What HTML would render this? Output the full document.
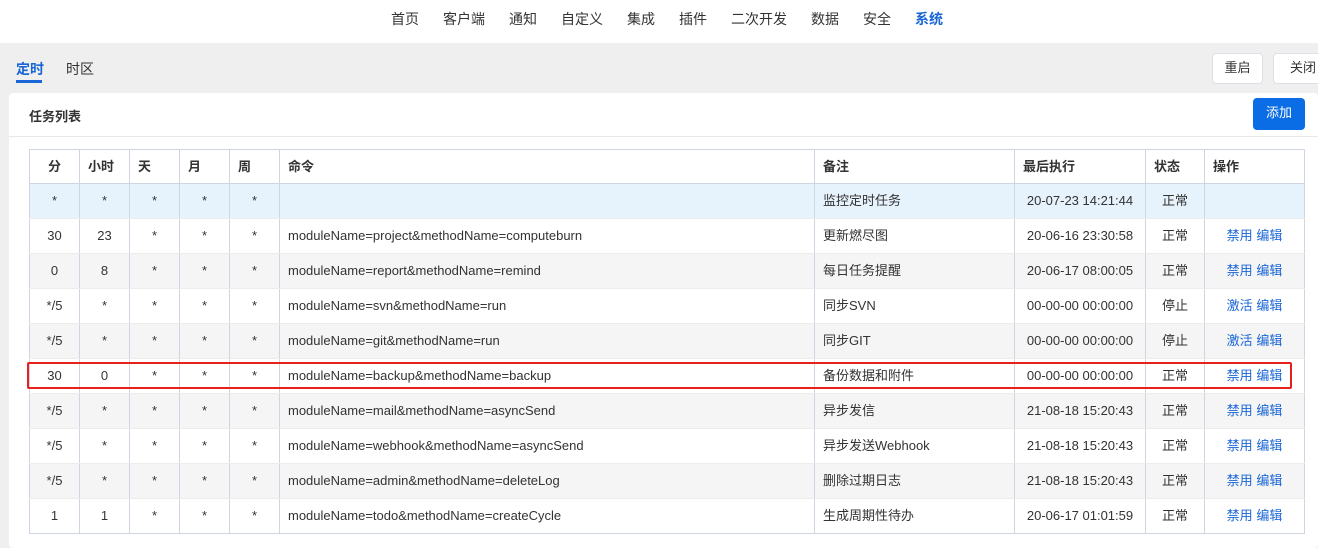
<!DOCTYPE html>
<html><head><meta charset="utf-8"><style>
*{margin:0;padding:0;box-sizing:border-box}
body{width:1318px;height:548px;overflow:hidden;background:#efefef;font-family:"Liberation Sans","Noto Sans CJK SC",sans-serif;font-size:13px;color:#333;position:relative}
.top{position:absolute;left:0;top:0;width:1318px;height:43px;background:#fff}
.nav{position:absolute;top:9px;font-size:14px;color:#333}
.tab{position:absolute;top:59px;font-size:14px}
.btn{position:absolute;top:53px;height:31px;background:#fff;border:1px solid #dcdfe6;border-radius:4px;font-size:13px;text-align:center;line-height:28px}
.card{position:absolute;left:9px;top:93px;width:1309px;height:455px;background:#fff;border-radius:4px}
.hd{position:absolute;left:0;top:0;width:100%;height:44px;border-bottom:1px solid #e8e8e8}
table{position:absolute;left:20px;top:56px;border-collapse:collapse;table-layout:fixed;width:1275px}
td,th{height:35px;border-left:1px solid #cfd5e2;border-right:1px solid #cfd5e2;border-bottom:1px solid #ececec;font-weight:normal;white-space:nowrap;overflow:hidden;vertical-align:middle;padding-bottom:2px}
th{font-weight:bold;text-align:left;padding-left:8px;padding-bottom:3px;border-top:1px solid #cfd5e2;border-bottom:1px solid #cfd5e2;height:34px}
td.c{text-align:center}
td.l{padding-left:8px}
td.z{padding-bottom:3px}
tr.b td{background:#e6f2fc}
tr.g td{background:#f5f5f5}
tr:last-child td{border-bottom:1px solid #cfd5e2}
a{color:#1a66d6;text-decoration:none}
.red{position:absolute;left:27px;top:362px;width:1265px;height:27px;border:2px solid #e8201b;border-radius:2px}
</style></head><body>
<div class="top">
<span class="nav" style="left:391px">首页</span>
<span class="nav" style="left:443px">客户端</span>
<span class="nav" style="left:509px">通知</span>
<span class="nav" style="left:561px">自定义</span>
<span class="nav" style="left:627px">集成</span>
<span class="nav" style="left:679px">插件</span>
<span class="nav" style="left:731px">二次开发</span>
<span class="nav" style="left:811px">数据</span>
<span class="nav" style="left:863px">安全</span>
<span class="nav" style="left:915px;color:#1a66d6;font-weight:bold">系统</span>
</div>
<span class="tab" style="left:16px;color:#1a66d6;font-weight:bold">定时</span>
<div style="position:absolute;left:16px;top:80px;width:26px;height:3px;background:#1a66d6"></div>
<span class="tab" style="left:66px">时区</span>
<div class="btn" style="left:1212px;width:51px">重启</div>
<div class="btn" style="left:1273px;width:60px">关闭</div>
<div class="card">
<div class="hd"><span style="position:absolute;left:20px;top:13px;font-weight:bold;font-size:13px">任务列表</span>
<div style="position:absolute;left:1244px;top:5px;width:52px;height:32px;background:#0b6de6;border-radius:4px;color:#fff;text-align:center;line-height:30px">添加</div></div>
<table>
<colgroup><col style="width:50px"><col style="width:50px"><col style="width:50px"><col style="width:50px"><col style="width:50px"><col style="width:535px"><col style="width:200px"><col style="width:131px"><col style="width:59px"><col style="width:100px"></colgroup>
<tr><th style="text-align:center;padding-left:0">分</th><th>小时</th><th>天</th><th>月</th><th>周</th><th>命令</th><th>备注</th><th>最后执行</th><th>状态</th><th>操作</th></tr>
<tr class="b"><td class="c">*</td><td class="c">*</td><td class="c">*</td><td class="c">*</td><td class="c">*</td><td class="l"></td><td class="l z">监控定时任务</td><td class="c">20-07-23 14:21:44</td><td class="c z">正常</td><td class="c"></td></tr>
<tr><td class="c">30</td><td class="c">23</td><td class="c">*</td><td class="c">*</td><td class="c">*</td><td class="l">moduleName=project&amp;methodName=computeburn</td><td class="l z">更新燃尽图</td><td class="c">20-06-16 23:30:58</td><td class="c z">正常</td><td class="c z"><a>禁用</a> <a>编辑</a></td></tr>
<tr class="g"><td class="c">0</td><td class="c">8</td><td class="c">*</td><td class="c">*</td><td class="c">*</td><td class="l">moduleName=report&amp;methodName=remind</td><td class="l z">每日任务提醒</td><td class="c">20-06-17 08:00:05</td><td class="c z">正常</td><td class="c z"><a>禁用</a> <a>编辑</a></td></tr>
<tr><td class="c">*/5</td><td class="c">*</td><td class="c">*</td><td class="c">*</td><td class="c">*</td><td class="l">moduleName=svn&amp;methodName=run</td><td class="l z">同步SVN</td><td class="c">00-00-00 00:00:00</td><td class="c z">停止</td><td class="c z"><a>激活</a> <a>编辑</a></td></tr>
<tr class="g"><td class="c">*/5</td><td class="c">*</td><td class="c">*</td><td class="c">*</td><td class="c">*</td><td class="l">moduleName=git&amp;methodName=run</td><td class="l z">同步GIT</td><td class="c">00-00-00 00:00:00</td><td class="c z">停止</td><td class="c z"><a>激活</a> <a>编辑</a></td></tr>
<tr><td class="c">30</td><td class="c">0</td><td class="c">*</td><td class="c">*</td><td class="c">*</td><td class="l">moduleName=backup&amp;methodName=backup</td><td class="l z">备份数据和附件</td><td class="c">00-00-00 00:00:00</td><td class="c z">正常</td><td class="c z"><a>禁用</a> <a>编辑</a></td></tr>
<tr class="g"><td class="c">*/5</td><td class="c">*</td><td class="c">*</td><td class="c">*</td><td class="c">*</td><td class="l">moduleName=mail&amp;methodName=asyncSend</td><td class="l z">异步发信</td><td class="c">21-08-18 15:20:43</td><td class="c z">正常</td><td class="c z"><a>禁用</a> <a>编辑</a></td></tr>
<tr><td class="c">*/5</td><td class="c">*</td><td class="c">*</td><td class="c">*</td><td class="c">*</td><td class="l">moduleName=webhook&amp;methodName=asyncSend</td><td class="l z">异步发送Webhook</td><td class="c">21-08-18 15:20:43</td><td class="c z">正常</td><td class="c z"><a>禁用</a> <a>编辑</a></td></tr>
<tr class="g"><td class="c">*/5</td><td class="c">*</td><td class="c">*</td><td class="c">*</td><td class="c">*</td><td class="l">moduleName=admin&amp;methodName=deleteLog</td><td class="l z">删除过期日志</td><td class="c">21-08-18 15:20:43</td><td class="c z">正常</td><td class="c z"><a>禁用</a> <a>编辑</a></td></tr>
<tr><td class="c">1</td><td class="c">1</td><td class="c">*</td><td class="c">*</td><td class="c">*</td><td class="l">moduleName=todo&amp;methodName=createCycle</td><td class="l z">生成周期性待办</td><td class="c">20-06-17 01:01:59</td><td class="c z">正常</td><td class="c z"><a>禁用</a> <a>编辑</a></td></tr>
</table>
</div>
<div class="red"></div>
</body></html>
